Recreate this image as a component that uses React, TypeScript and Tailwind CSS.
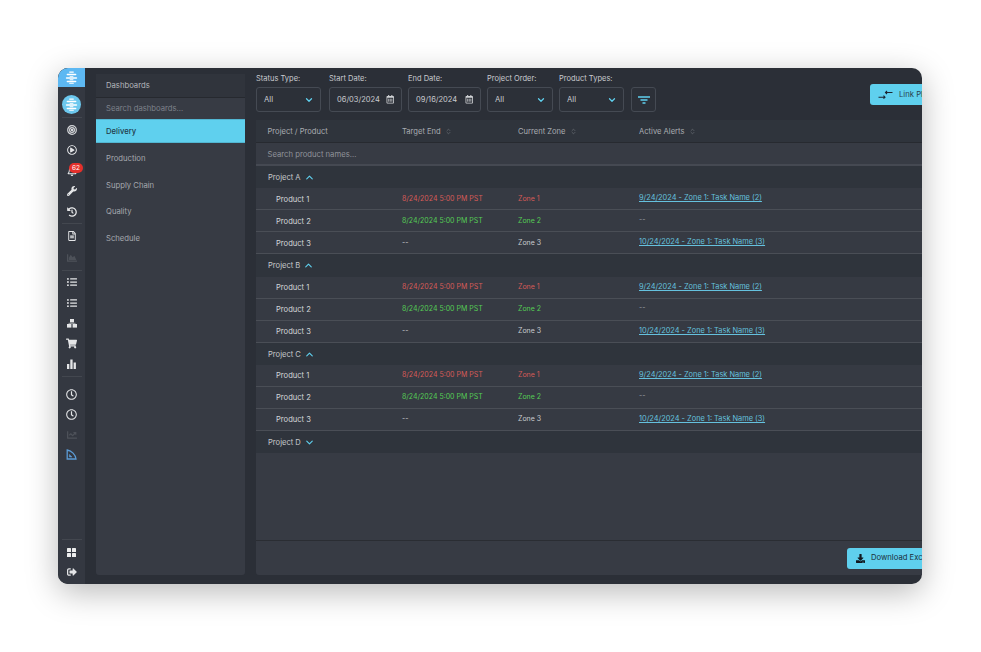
import React from "react";
import { FaRegBell, FaWrench, FaHistory, FaRegFileAlt, FaChartArea, FaListUl, FaShoppingCart, FaRegClock, FaChartLine, FaSignOutAlt, FaDownload, FaRegCalendarAlt, FaRegPlayCircle } from "react-icons/fa";
import { LuChevronDown, LuChevronUp, LuChevronsUpDown } from "react-icons/lu";

const Logo = ({ size = 14, color = "#fff" }: { size?: number; color?: string }) => (
  <svg width={size} height={size} viewBox="0 0 16 16" fill={color}>
    <rect x="5" y="0.5" width="6" height="1.6" rx="0.8" />
    <rect x="2" y="3.3" width="12" height="1.8" rx="0.9" />
    <rect x="5.5" y="6" width="5" height="1.2" rx="0.6" />
    <rect x="1" y="7.8" width="14" height="1.8" rx="0.9" />
    <rect x="5.5" y="10.2" width="5" height="1.2" rx="0.6" />
    <rect x="2" y="11.9" width="12" height="1.8" rx="0.9" />
    <rect x="5" y="14.4" width="6" height="1.3" rx="0.6" />
  </svg>
);

const Target = () => (
  <svg width="10" height="10" viewBox="0 0 10 10" fill="none" stroke="#d5d7da" strokeWidth="1.2">
    <circle cx="5" cy="5" r="4.3" />
    <circle cx="5" cy="5" r="2.4" />
    <circle cx="5" cy="5" r="0.7" />
  </svg>
);

const Drafting = () => (
  <svg width="11" height="11" viewBox="0 0 11 11" fill="none" stroke="#5b9bd5" strokeWidth="1.3">
    <path d="M1.2 1v9h8.8C9.4 5.6 5.8 1.8 1.2 1Z" />
    <path d="M3.4 8V5.4L6 8Z" fill="#5b9bd5" strokeWidth="0.5" />
  </svg>
);

const Boxes = () => (
  <svg width="10" height="9" viewBox="0 0 10 9" fill="#e4e5e7">
    <rect x="3" y="0" width="4" height="3.4" />
    <rect x="0" y="5" width="4.4" height="3.6" />
    <rect x="5.6" y="5" width="4.4" height="3.6" />
    <rect x="1.5" y="3.9" width="7" height="0.6" />
  </svg>
);

const Bars = () => (
  <svg width="9" height="10" viewBox="0 0 9 10" fill="#e4e5e7">
    <rect x="0" y="5" width="2.3" height="5" />
    <rect x="3.3" y="0.5" width="2.3" height="9.5" />
    <rect x="6.6" y="3.5" width="2.3" height="6.5" />
  </svg>
);

const Grid = () => (
  <svg width="9" height="9" viewBox="0 0 9 9" fill="#eceded">
    <rect x="0" y="0" width="4" height="4" rx="0.6" />
    <rect x="5" y="0" width="4" height="4" rx="0.6" />
    <rect x="0" y="5" width="4" height="4" rx="0.6" />
    <rect x="5" y="5" width="4" height="4" rx="0.6" />
  </svg>
);

const Rule = ({ y = "my-[2px]" }: { y?: string }) => <div className={"h-px w-[20px] bg-[#43474f] shrink-0 " + y} />;

const Ico = ({ children, h = 20.5 }: { children: React.ReactNode; h?: number }) => (
  <div className="flex items-center justify-center w-full text-[10px] text-[#e4e5e7] shrink-0" style={{ height: h }}>
    {children}
  </div>
);

const Sidebar = () => (
  <div className="w-[27px] shrink-0 bg-[#343841] flex flex-col items-center">
    <div className="w-full h-[19px] bg-[#5db8f2] flex items-center justify-center">
      <Logo size={13} />
    </div>
    <div className="mt-[8px] w-[19px] h-[19px] rounded-full bg-[#6cc8ee] flex items-center justify-center">
      <Logo size={13} />
    </div>
    <Rule y="mt-[3px] mb-px" />
    <Ico h={21}><Target /></Ico>
    <Ico><FaRegPlayCircle /></Ico>
    <div className="relative w-full">
      <Ico><FaRegBell /></Ico>
      <span className="absolute left-[11px] top-[2px] w-[14px] h-[10px] rounded-full bg-[#e4302b] text-white text-[6.5px] leading-[10px] text-center">62</span>
    </div>
    <Ico><FaWrench /></Ico>
    <Ico><FaHistory /></Ico>
    <Rule y="my-px" />
    <Ico h={22}><FaRegFileAlt /></Ico>
    <Ico h={21}><span className="text-[#4d5159]"><FaChartArea /></span></Ico>
    <Rule y="mt-[2px] mb-px" />
    <Ico h={20}><FaListUl /></Ico>
    <Ico h={21}><FaListUl /></Ico>
    <Ico h={20}><Boxes /></Ico>
    <Ico h={21}><FaShoppingCart className="text-[11px]" /></Ico>
    <Ico h={20}><Bars /></Ico>
    <Rule y="mt-[2px] mb-[7px]" />
    <Ico h={20}><FaRegClock className="text-[11px]" /></Ico>
    <Ico h={21}><FaRegClock className="text-[11px]" /></Ico>
    <Ico h={20}><span className="text-[#4d5159]"><FaChartLine /></span></Ico>
    <Ico h={19}><Drafting /></Ico>
    <div className="flex-1" />
    <Rule />
    <Ico h={20}><Grid /></Ico>
    <Ico h={20}><FaSignOutAlt /></Ico>
    <div className="h-[2px] shrink-0" />
  </div>
);

const DashPanel = () => (
  <div className="w-[149px] shrink-0 mt-[6px] mb-[9px] ml-[11px] bg-[#373b44] rounded-b-[3px] flex flex-col text-[7.7px] text-[#a5a8ae]">
    <div className="h-[24px] bg-[#30343c] border-b border-[#26292f] flex items-center pl-[10px] text-[#b4b6bb]">Dashboards</div>
    <div className="h-[21px] flex items-center pl-[10px] text-[#7d818a]">Search dashboards...</div>
    <div className="h-[24px] bg-[#5fd0ee] border-y border-[#52b6d2] flex items-center pl-[10px] pt-[2px] text-[#1f3b4b] font-medium">Delivery</div>
    {["Production", "Supply Chain", "Quality", "Schedule"].map((t, i) => (
      <div key={t} className={"h-[26.5px] flex items-center pl-[10px]" + (i === 0 ? " mt-[3px]" : "")}>{t}</div>
    ))}
  </div>
);

const Field = ({ label, w, value, date }: { label: string; w: string; value: string; date?: boolean }) => (
  <div className={"flex flex-col shrink-0 " + w}>
    <div className="h-[19px] pt-[3px] flex items-center text-[7.5px] text-[#c9cbcf]">{label}</div>
    <div className={"h-[25px] rounded-[3px] border border-[#454a53] bg-[#2c3038] flex items-center justify-between text-[#c9cbcf] pl-[7px] " + (date ? "pr-[7px] text-[7.5px]" : "pr-[6px] text-[7.7px]")}>
      {date ? (
        <>
          <span className="pt-[1px]">{value}</span>
          <FaRegCalendarAlt className="text-[8.5px] text-[#d0d2d5]" />
        </>
      ) : (
        <>
          <span>{value}</span>
          <LuChevronDown className="text-[10px] text-[#5fd0ee]" strokeWidth={3} />
        </>
      )}
    </div>
  </div>
);

const Swap = () => (
  <svg className="shrink-0" width="15" height="10" viewBox="0 0 15 10" fill="none" stroke="#1c2530" strokeWidth="1.1">
    <path d="M7.5 2.5h7M9 1L7.5 2.5 9 4" />
    <path d="M0.5 7.2H7M5.5 5.7L7 7.2 5.5 8.7" />
  </svg>
);

const Sort = () => <LuChevronsUpDown className="text-[7px] text-[#767a82]" />;

const Row = ({ name, date, zone, tone, alert }: { name: string; date: string; zone: string; tone: string; alert: string }) => (
  <div className="h-[22px] flex items-center border-b border-[#4a4e56] bg-[#363a43] text-[7px]">
    <div className="w-[146px] pl-[20px] pt-[1px] text-[#d3d5d8] text-[7.6px] shrink-0">{name}</div>
    <div className={"w-[116px] shrink-0 " + tone}>{date}</div>
    <div className={"w-[121px] shrink-0 " + tone}>{zone}</div>
    {alert === "--" ? (
      <div className="text-[#9a9da3] pb-[2px]">--</div>
    ) : (
      <div className="text-[#65c1de] underline whitespace-nowrap text-[7.4px] pb-[2px]">{alert}</div>
    )}
  </div>
);

const Group = ({ name, open = true }: { name: string; open?: boolean }) => (
  <div>
    <div className="h-[22.33px] bg-[#2f343c] flex items-center pl-[12px] pt-[1px] gap-[3px] text-[7.6px] text-[#c5c7cb]">
      <span>{name}</span>
      {open ? (
        <LuChevronUp className="text-[11px] text-[#5fd0ee]" strokeWidth={2.5} />
      ) : (
        <LuChevronDown className="text-[11px] text-[#5fd0ee]" strokeWidth={2.5} />
      )}
    </div>
    {open && (
      <>
        <Row name="Product 1" date="8/24/2024 5:00 PM PST" zone="Zone 1" tone="text-[#d65a58]" alert="9/24/2024 - Zone 1: Task Name (2)" />
        <Row name="Product 2" date="8/24/2024 5:00 PM PST" zone="Zone 2" tone="text-[#55cc55]" alert="--" />
        <Row name="Product 3" date="--" zone="Zone 3" tone="text-[#c9cbcf]" alert="10/24/2024 - Zone 1: Task Name (3)" />
      </>
    )}
  </div>
);

const Main = () => (
  <div className="flex-1 min-w-0 ml-[11px] flex flex-col mb-[9px]">
    <div className="h-[52px] shrink-0 flex gap-[7px]">
      <Field label="Status Type:" w="w-[65px] mr-px" value="All" />
      <Field label="Start Date:" w="w-[73px]" value="06/03/2024" date />
      <div className="-ml-px"><Field label="End Date:" w="w-[73px]" value="09/16/2024" date /></div>
      <div className="-ml-px"><Field label="Project Order:" w="w-[66px]" value="All" /></div>
      <div className="-ml-px"><Field label="Product Types:" w="w-[65px]" value="All" /></div>
      <div className="w-[25px] h-[25px] mt-[19px] rounded-[3px] border border-[#454a53] bg-[#2c3038] flex items-center justify-center shrink-0">
        <svg width="12" height="8" viewBox="0 0 12 8" stroke="#5fd0ee" strokeWidth="1.5">
          <path d="M0 1h12M2.5 4h7M4.5 7h3" />
        </svg>
      </div>
      <div className="flex-1" />
      <div className="w-[52px] h-[21px] mt-[16px] rounded-l-[3px] bg-[#5fd0ee] flex items-center pl-[8px] gap-[6px] text-[7.7px] text-[#2a3d4c] whitespace-nowrap overflow-hidden shrink-0">
        <Swap />
        <span>Link Plan</span>
      </div>
    </div>
    <div className="flex-1 bg-[#373b44] flex flex-col min-h-0 rounded-bl-[3px]">
      <div className="h-[23px] shrink-0 bg-[#2f343c] border-b border-[#272a30] flex items-center text-[7.6px] text-[#a9acb1] pt-[2px]">
        <div className="w-[146px] pl-[11.5px]">Project / Product</div>
        <div className="w-[116px] flex items-center gap-[4px]"><span>Target End</span><Sort /></div>
        <div className="w-[121px] flex items-center gap-[4px]"><span>Current Zone</span><Sort /></div>
        <div className="flex items-center gap-[4px]"><span>Active Alerts</span><Sort /></div>
      </div>
      <div className="h-[23px] shrink-0 border-b-2 border-[#454952] flex items-center pl-[11.5px] pt-[2px] text-[7.7px] text-[#8f9299]">Search product names...</div>
      <Group name="Project A" />
      <Group name="Project B" />
      <Group name="Project C" />
      <Group name="Project D" open={false} />
      <div className="flex-1" />
      <div className="h-[35px] shrink-0 border-t border-[#2a2d33] flex items-center justify-end">
        <div className="w-[75px] h-[21px] rounded-l-[3px] bg-[#5fd0ee] flex items-center pl-[9px] gap-[6px] text-[7.7px] text-[#1a2e3a] whitespace-nowrap overflow-hidden">
          <FaDownload className="text-[9px] text-[#11181f] shrink-0" />
          <span>Download Excel</span>
        </div>
      </div>
    </div>
  </div>
);

export default function App() {
  return (
    <div className="w-[981px] h-[652px] bg-white pt-[68px] pl-[58px] overflow-hidden" style={{ fontFamily: '"Inter", "Liberation Sans", sans-serif' }}>
      <div className="w-[864px] h-[516px] rounded-[10px] overflow-hidden bg-[#2b2f37] flex shadow-[0_8px_32px_rgba(0,0,0,0.28)]">
        <Sidebar />
        <DashPanel />
        <Main />
      </div>
    </div>
  );
}
